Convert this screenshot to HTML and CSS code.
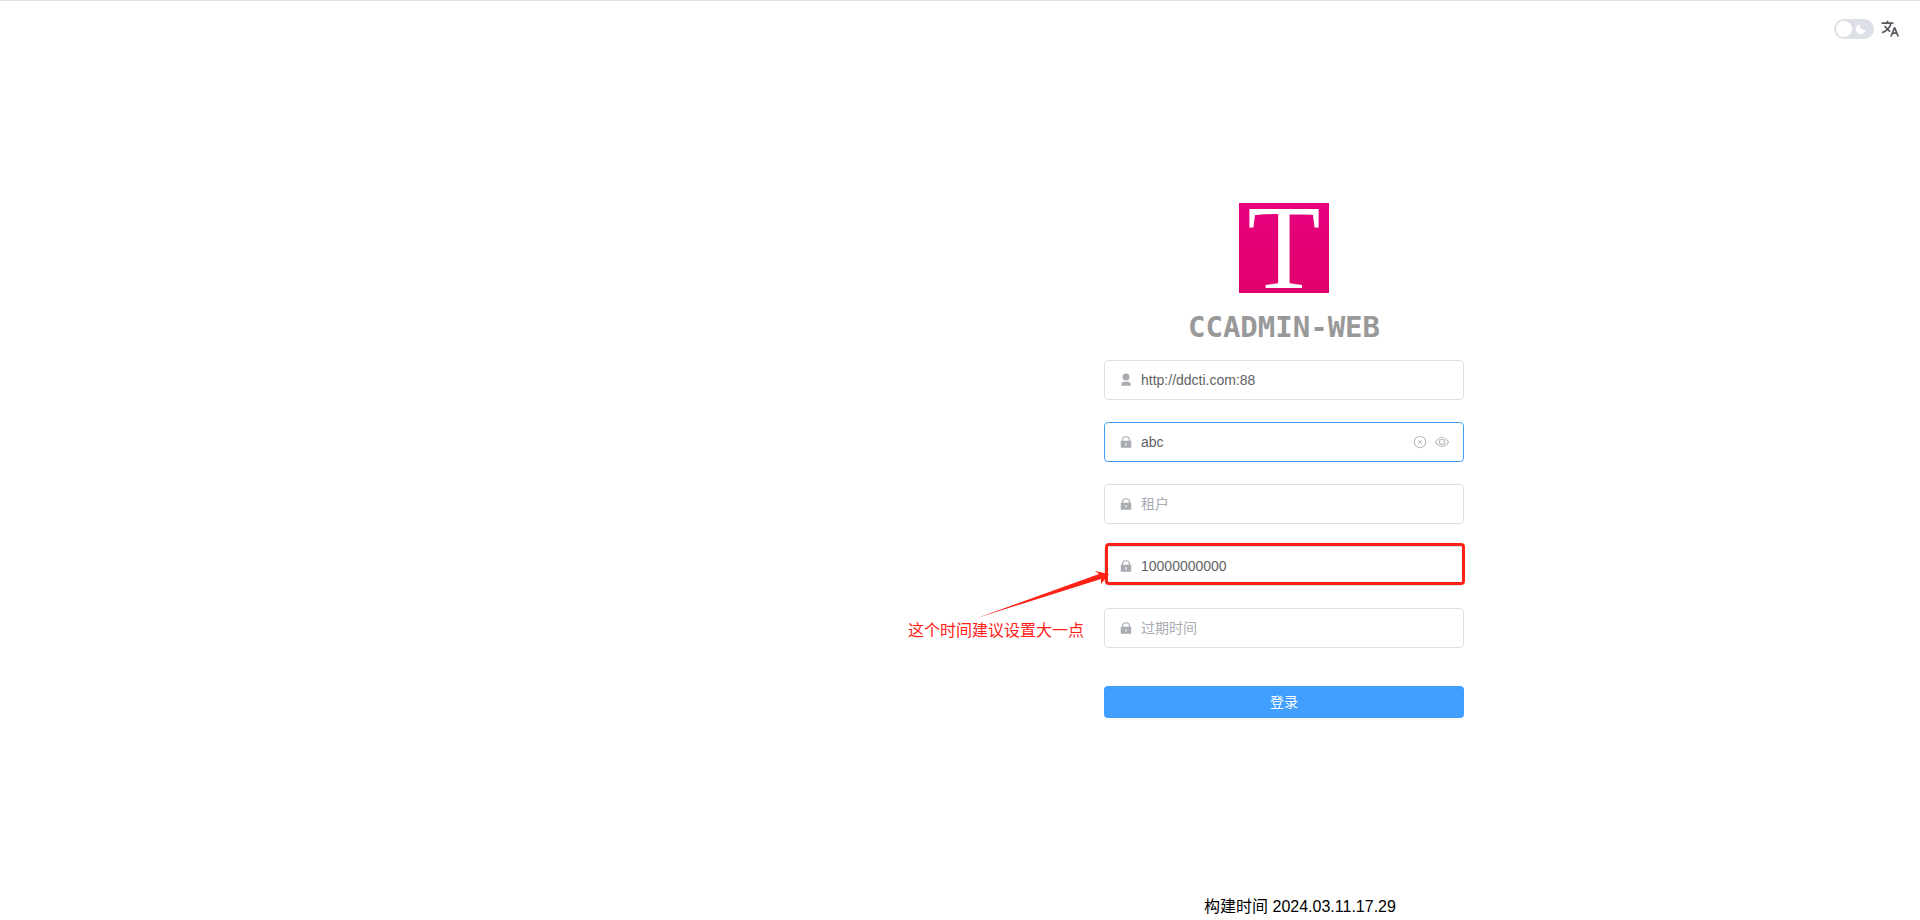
FILE: index.html
```html
<!DOCTYPE html>
<html lang="zh-CN">
<head>
<meta charset="UTF-8">
<meta name="viewport" content="width=device-width, initial-scale=1">
<title>CCADMIN-WEB</title>
<link rel="stylesheet" href="styles.css">
</head>
<body class="page">
<svg class="sprite" aria-hidden="true">
  <symbol id="i-user" viewBox="0 0 24 24"><path d="M20 22H4v-2a5 5 0 0 1 5-5h6a5 5 0 0 1 5 5v2zm-8-9a6 6 0 1 1 0-12 6 6 0 0 1 0 12z"/></symbol>
  <symbol id="i-lock" viewBox="0 0 24 24"><path d="M19 10h1a1 1 0 0 1 1 1v10a1 1 0 0 1-1 1H4a1 1 0 0 1-1-1V11a1 1 0 0 1 1-1h1V9a7 7 0 1 1 14 0v1zm-2 0V9A5 5 0 0 0 7 9v1h10zm-6 4v4h2v-4h-2z"/></symbol>
  <symbol id="i-clear" viewBox="0 0 1024 1024"><path d="M375 375 649 649M649 375 375 649" stroke="currentColor" stroke-width="64"/><path d="M512 896a384 384 0 1 0 0-768 384 384 0 0 0 0 768m0 64a448 448 0 1 1 0-896 448 448 0 0 1 0 896"/></symbol>
  <symbol id="i-view" viewBox="0 0 1024 1024"><path d="M512 160c320 0 512 352 512 352S832 864 512 864 0 512 0 512s192-352 512-352m0 64c-225.28 0-384.128 208.064-436.8 288 52.608 79.872 211.456 288 436.8 288 225.28 0 384.128-208.064 436.8-288-52.608-79.872-211.456-288-436.8-288m0 64a224 224 0 1 1 0 448 224 224 0 0 1 0-448m0 64a160.192 160.192 0 0 0-160 160c0 88.192 71.744 160 160 160s160-71.808 160-160-71.744-160-160-160"/></symbol>
</svg>

<header class="toolbar">
  <label class="theme">
    <input class="theme-input" type="checkbox" role="switch" aria-label="深色模式">
    <svg class="theme-moon" viewBox="0 0 12 12" aria-hidden="true"><path d="M5.2 1.2a4 4 0 0 0 5.6 5.2A5 5 0 1 1 5.2 1.2z"/></svg>
  </label>
  <button class="lang" type="button" aria-label="语言">
    <svg class="lang-icon" viewBox="0 0 24 24" aria-hidden="true"><path d="M18.5 10l4.4 11h-2.155l-1.201-3h-4.09l-1.199 3h-2.154L16.5 10h2zM10 2v2h6v2h-1.968a18.222 18.222 0 0 1-3.62 6.301 14.864 14.864 0 0 0 2.336 1.707l-.751 1.878A17.015 17.015 0 0 1 9 13.725a16.676 16.676 0 0 1-6.201 3.548l-.536-1.929a14.7 14.7 0 0 0 5.327-3.042A18.078 18.078 0 0 1 4.767 8h2.24A16.032 16.032 0 0 0 9 10.877a16.165 16.165 0 0 0 2.91-4.876L2 6V4h6V2h2zm7.5 10.885L16.253 16h2.492L17.5 12.885z"/></svg>
  </button>
</header>

<main class="columns">
  <form class="login">
    <svg class="logo" viewBox="0 0 90 90" role="img" aria-label="T">
      <defs><linearGradient id="pink" x1="0" y1="0" x2="0" y2="1"><stop offset="0" stop-color="#e6007e"/><stop offset="1" stop-color="#e0006c"/></linearGradient></defs>
      <rect width="90" height="90" fill="url(#pink)"/>
      <text class="logo-letter" x="45" y="85" text-anchor="middle">T</text>
    </svg>
    <h1 class="title">CCADMIN-WEB</h1>

    <div class="fields">
      <label class="field">
        <svg class="icon" aria-hidden="true"><use href="#i-user"/></svg>
        <input class="field-input" type="text" value="http://ddcti.com:88" aria-label="地址">
      </label>
      <div class="field field-active">
        <svg class="icon" aria-hidden="true"><use href="#i-lock"/></svg>
        <input class="field-input" type="text" value="abc" aria-label="密钥">
        <button class="field-button" type="button" aria-label="清空"><svg class="icon" aria-hidden="true"><use href="#i-clear"/></svg></button>
        <button class="field-button" type="button" aria-label="显示"><svg class="icon" aria-hidden="true"><use href="#i-view"/></svg></button>
      </div>
      <label class="field">
        <svg class="icon" aria-hidden="true"><use href="#i-lock"/></svg>
        <input class="field-input" type="text" placeholder="租户" aria-label="租户">
      </label>
      <div class="marked">
        <label class="field">
          <svg class="icon" aria-hidden="true"><use href="#i-lock"/></svg>
          <input class="field-input" type="text" value="10000000000" aria-label="时间">
        </label>
        <div class="mark-box"></div>
        <svg class="mark-arrow" viewBox="0 0 134 50" aria-hidden="true"><path d="M1 48 123 4 119 1 133 4 125 14 125 9z"/></svg>
        <span class="mark-text">这个时间建议设置大一点</span>
      </div>
      <label class="field">
        <svg class="icon" aria-hidden="true"><use href="#i-lock"/></svg>
        <input class="field-input" type="text" placeholder="过期时间" aria-label="过期时间">
      </label>
    </div>
    <button class="submit" type="button">登录</button>
  </form>
</main>

<footer class="columns footer">
  <p class="build">构建时间 2024.03.11.17.29</p>
</footer>
</body>
</html>
```
FILE: styles.css
```css
* {
  box-sizing: border-box;
}

.page {
  display: grid;
  grid-template-rows: 1fr auto 1fr;
  min-height: 100vh;
  margin: 0;
  border-top: 1px solid #dfdfdf;
  background: #fff;
  color: #000;
  font-family: "Liberation Sans", Arial, "Noto Sans CJK SC", sans-serif;
  font-size: 16px;
}

.sprite {
  position: absolute;
  width: 0;
  height: 0;
}

.toolbar {
  display: flex;
  justify-content: flex-end;
  align-items: center;
  align-self: start;
  gap: 6px;
  padding: 18px 20px;
}

.theme {
  position: relative;
  display: flex;
}

.theme-input {
  appearance: none;
  width: 40px;
  height: 20px;
  margin: 0;
  padding: 2px;
  border-radius: 10px;
  background: #dcdfe6;
}

.theme-input::before {
  content: "";
  display: block;
  width: 16px;
  height: 16px;
  border-radius: 50%;
  background: #fff;
}

.theme-input:checked::before {
  margin-left: auto;
}

.theme-moon {
  position: absolute;
  top: 4px;
  right: 7px;
  width: 12px;
  height: 12px;
  fill: #fff;
  pointer-events: none;
}

.lang,
.field-button {
  display: flex;
  padding: 0;
  border: 0;
  background: none;
  color: inherit;
}

.lang-icon {
  width: 20px;
  height: 20px;
  fill: #55575c;
}

.columns {
  display: grid;
  grid-template-columns: 1fr 1fr;
  gap: 288px;
  padding: 0 32px;
}

.login {
  grid-column: 2;
  display: flex;
  flex-direction: column;
  width: 360px;
}

.logo {
  align-self: center;
  width: 90px;
  height: 90px;
  overflow: visible;
}

.logo-letter {
  fill: #fff;
  font-family: "Liberation Serif", serif;
  font-size: 120px;
}

.title {
  margin: 16px 0 14px;
  color: #999;
  font-family: "DejaVu Sans Mono", monospace;
  font-size: 29px;
  font-weight: 700;
  line-height: 37px;
  text-align: center;
}

.fields {
  display: flex;
  flex-direction: column;
  gap: 22px;
}

.field {
  display: flex;
  align-items: center;
  gap: 8px;
  height: 40px;
  padding: 0 14px;
  border: 1px solid #dcdfe6;
  border-radius: 4px;
  background: #fff;
  color: #a8abb2;
}

.field-active {
  border-color: #409eff;
}

.icon {
  flex: none;
  width: 14px;
  height: 14px;
  fill: currentColor;
}

.field-input {
  flex: 1;
  min-width: 0;
  padding: 0;
  border: 0;
  outline: 0;
  background: none;
  color: #606266;
  font-family: inherit;
  font-size: 14px;
  line-height: 20px;
}

.field-input::placeholder {
  color: #a8abb2;
}

.marked {
  position: relative;
}

.mark-box {
  position: absolute;
  inset: -3px -1px 1px 1px;
  border: 3px solid #ff2116;
  border-radius: 4px;
  pointer-events: none;
}

.mark-arrow {
  position: absolute;
  top: 24px;
  right: 354px;
  width: 134px;
  height: 50px;
  fill: #ff2116;
}

.mark-text {
  position: absolute;
  top: 75px;
  right: 380px;
  color: #ff2116;
  font-size: 16px;
  line-height: 20px;
  white-space: nowrap;
}

.submit {
  height: 32px;
  margin-top: 38px;
  padding: 0 0 2px;
  border: 0;
  border-radius: 4px;
  background: #409eff;
  color: #fff;
  font-family: inherit;
  font-size: 14px;
}

.footer {
  align-self: end;
}

.build {
  grid-column: 2;
  width: 360px;
  margin: 0;
  padding-left: 32px;
  line-height: 26px;
  text-align: center;
}
```
